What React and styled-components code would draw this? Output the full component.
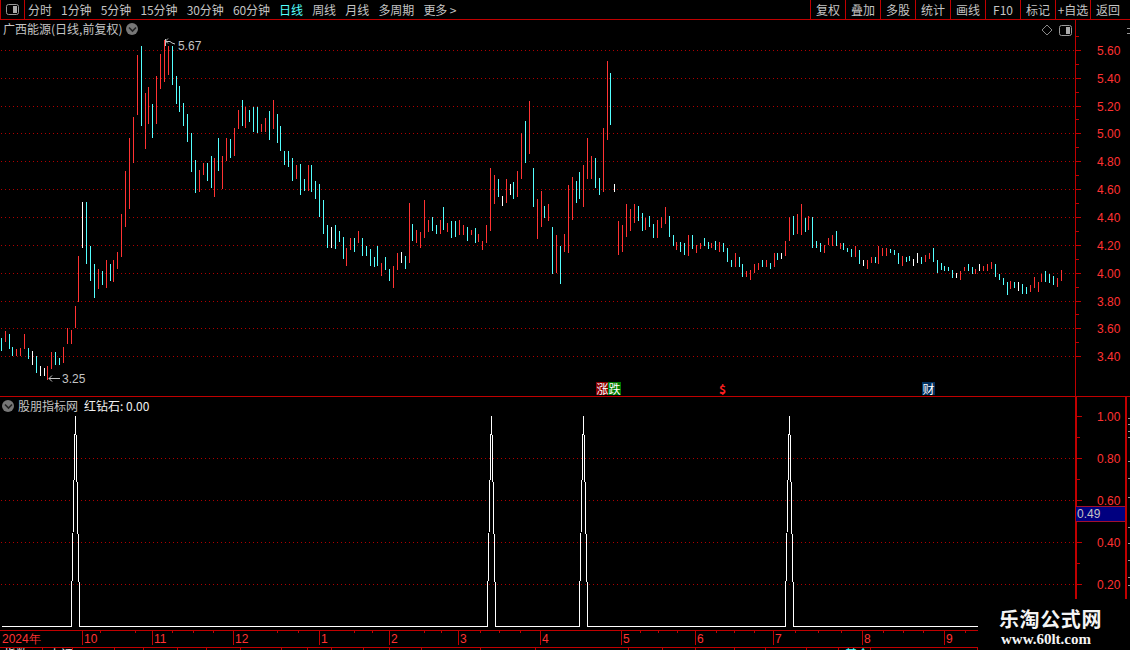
import React from "react";
import styled, { createGlobalStyle } from "styled-components";

const Global = createGlobalStyle`
  html, body { margin: 0; padding: 0; background: #000; overflow: hidden; }
  #root { width: 1130px; height: 650px; }
`;

const RED = "#ff3232";
const LINE = "#c00000";
const DOT = "#b00000";
const CYAN = "#54ffff";
const GREY = "#c4c4c4";
const CJK = `"Noto Sans CJK SC", "Liberation Sans", sans-serif`;
const NUM = `"Liberation Sans", Arial, sans-serif`;

const Page = styled.div`
  position: relative;
  width: 1130px;
  height: 650px;
  background: #000;
  display: flex;
  flex-direction: column;
  overflow: hidden;
  font-family: ${CJK};
`;

const Toolbar = styled.div`
  display: flex;
  align-items: stretch;
  height: 19px;
  border-bottom: 1px solid ${LINE};
  flex: none;
`;

const LayoutBox = styled.div`
  width: 22px;
  border-left: 1px solid ${LINE};
  border-right: 1px solid ${LINE};
  display: flex;
  align-items: center;
  justify-content: center;
  padding-right: 1px;
  box-sizing: content-box;
  margin-right: -1px;
`;

const Periods = styled.div`
  display: flex;
  align-items: center;
  gap: 9.3px;
  margin-left: 4px;
`;

const Period = styled.span`
  font-size: 12px;
  line-height: 19px;
  white-space: nowrap;
  letter-spacing: -0.1px;
  color: ${(p) => (p.$active ? CYAN : GREY)};
`;

const Actions = styled.div`
  display: flex;
  margin-left: auto;
  margin-right: 5px;
`;

const Action = styled.div`
  width: 34px;
  border-left: 1px solid ${LINE};
  font-size: 12px;
  line-height: 19px;
  text-align: center;
  white-space: nowrap;
  color: ${GREY};
`;

const PricePanel = styled.div`
  position: relative;
  height: 376px;
  border-bottom: 1px solid ${LINE};
  flex: none;
`;

const IndicatorPanel = styled.div`
  position: relative;
  height: 233px;
  flex: none;
`;

const Chart = styled.svg`
  display: block;
`;

const AxisText = styled.text`
  font-family: ${NUM};
  font-size: 12px;
  fill: ${RED};
`;

const NoteText = styled.text`
  font-family: ${NUM};
  font-size: 12px;
  fill: ${GREY};
`;

const PanelTitle = styled.div`
  position: absolute;
  left: ${(p) => p.$left}px;
  top: ${(p) => p.$top}px;
  display: flex;
  align-items: center;
  gap: ${(p) => p.$gap}px;
  height: 18px;
  font-size: 12px;
  line-height: 18px;
  white-space: nowrap;
  color: ${GREY};
`;

const Value = styled.span`
  color: #f0f0f0;
  margin-left: 2px;
`;

const Circle = styled.span`
  width: 12px;
  height: 12px;
  border-radius: 50%;
  background: #777;
  display: flex;
  align-items: center;
  justify-content: center;
  flex: none;
`;

const PanelIcons = styled.div`
  position: absolute;
  top: 4px;
  right: 58px;
  display: flex;
  align-items: center;
  gap: 6px;
`;

const Badge = styled.span`
  position: absolute;
  left: ${(p) => p.$left}px;
  top: 362px;
  width: 13px;
  height: 13px;
  background: ${(p) => p.$bg};
  color: ${(p) => p.$color || "#fff"};
  font-size: 12px;
  line-height: 13px;
  text-align: center;
  font-weight: ${(p) => (p.$bold ? 700 : 400)};
`;

const ValueFlag = styled.div`
  position: absolute;
  left: 1076px;
  top: 109px;
  width: 49px;
  height: 16px;
  box-sizing: border-box;
  background: #000080;
  border-top: 1px solid #a01030;
  border-bottom: 1px solid #a01030;
  color: ${GREY};
  font-family: ${NUM};
  font-size: 12px;
  line-height: 14px;
  padding-left: 1px;
`;

const TimeAxis = styled.div`
  height: 16px;
  flex: none;
  border-top: 1px solid ${LINE};
  border-bottom: 1px solid ${LINE};
`;

const StatusStrip = styled.div`
  display: flex;
  flex: 1;
  overflow: hidden;
`;

const StatusCell = styled.div`
  flex: none;
  width: ${(p) => p.$w}px;
  box-sizing: border-box;
  border-right: 1px solid ${LINE};
  padding-left: ${(p) => p.$pad || 4}px;
  color: ${(p) => p.$color || "#e8e8e8"};
  font-size: 12px;
  line-height: 12px;
  white-space: nowrap;
  overflow: hidden;
`;

const Watermark = styled.div`
  position: absolute;
  left: 978px;
  top: 599px;
  width: 152px;
  height: 51px;
  background: #000;
  display: flex;
  flex-direction: column;
  align-items: flex-start;
  padding-left: 21px;
  box-sizing: border-box;
`;

const MarkTitle = styled.div`
  margin-top: 8px;
  font-size: 20px;
  line-height: 24px;
  font-weight: 700;
  letter-spacing: 0.6px;
  color: #f4f4f4;
  white-space: nowrap;
`;

const MarkUrl = styled.div`
  margin-top: 1px;
  margin-left: 2px;
  font-family: "Liberation Serif", serif;
  font-size: 15px;
  line-height: 15px;
  font-weight: 700;
  color: #f4f4f4;
  white-space: nowrap;
`;

const raw = `c338-351 r331-342 c334-349 c347-356 r349-356 r348-356 r334-349 c348-359 w351-365 c356-373 w366-376 w368-376 r366-380 r352-369 c352-365 c358-365 r347-363 r328-344 r330-344 r306-328 r256-302 w202-248 c202-264 c246-281 c264-298 r269-289 c271-285 r260-288 c264-281 r260-282 r252-269 r214-257 r171-227 r138-209 r117-163 r55-115 c46-126 r93-149 r87-124 c104-138 r76-124 r54-89 r40-82 r46-75 c46-85 c76-104 c86-112 c103-126 c114-142 c133-172 c160-193 r170-192 r163-175 c163-181 c156-188 r158-197 c138-171 r156-189 r138-161 c139-158 r128-156 r110-129 c100-126 r107-128 c110-122 c107-132 c107-133 r124-132 r118-132 c111-140 r100-129 c114-143 c126-151 c151-165 c151-167 c158-181 r165-179 c164-195 c179-191 r165-191 c165-192 c181-199 c184-217 c200-234 c225-248 w227-248 c225-249 c231-242 c237-259 r248-266 r238-250 c238-252 r231-243 c238-256 c246-256 c249-266 c257-267 c246-266 r263-276 c257-270 c269-281 r266-288 r253-270 w252-263 c256-269 r203-263 c224-241 r230-243 r232-248 r200-238 r220-232 c217-231 c225-234 r220-234 c207-230 r223-232 c221-238 c221-237 r220-235 r225-235 c227-241 r230-235 c228-243 r234-242 r241-250 r225-243 r168-231 r175-204 c179-197 w196-206 r179-203 w184-195 c182-199 r171-197 r133-179 c121-163 r101-154 c168-207 r199-239 r191-227 c206-218 r204-221 c227-274 r235-273 c246-284 r234-252 r185-253 r177-220 c181-203 c172-199 r165-207 r138-179 r156-179 c158-188 c178-195 r128-192 r61-140 c73-125 w184-192 r221-255 r225-252 r204-237 r209-231 r204-223 c206-221 c213-231 r218-230 c216-227 c224-238 r220-238 r217-228 r207-224 c216-237 c235-246 r242-250 c242-252 c243-255 r235-256 c235-249 r245-253 r243-249 c238-246 c242-249 r243-248 c241-250 r242-252 c243-252 c248-262 c260-267 r253-267 c257-267 c264-277 r271-277 r270-280 r264-273 r263-270 c260-267 r260-267 c263-269 r253-267 c253-260 w253-259 r241-256 r217-241 c216-235 r214-234 r204-235 c218-232 r216-230 c217-248 c241-248 c243-252 r245-253 r238-245 r235-246 c231-246 r243-249 c243-250 c248-252 c249-257 r246-257 c250-264 w260-266 r260-269 r257-263 c257-263 r246-264 r248-256 r248-256 c249-253 c250-255 c253-264 r256-266 c257-262 c256-261 w259-266 w253-263 c257-264 r255-262 r253-259 c248-262 c260-273 c263-270 c266-271 c267-271 c270-278 w273-278 r271-280 r267-271 c264-271 c267-274 r269-274 w264-271 r266-271 r264-271 r262-269 c264-277 c274-280 c278-285 c282-295 r281-289 c282-288 w282-291 c284-294 c287-294 r285-292 r277-288 r282-292 r274-282 c271-282 c274-283 c276-285 r278-287 r270-281`;

const COLORS = { r: RED, c: CYAN, w: "#ffffff" };
const bars = raw.split(" ").map((s, i) => {
  const [t, b] = s.slice(1).split("-").map(Number);
  return { x: Math.floor(1.33 + i * 3.883), t, b, color: COLORS[s[0]] };
});

const priceLabels = ["5.60", "5.40", "5.20", "5.00", "4.80", "4.60", "4.40", "4.20", "4.00", "3.80", "3.60", "3.40"];
const priceY = [50, 78, 106, 133, 161, 189, 217, 245, 273, 301, 328, 356];
const lowerLabels = [["1.00", 416], ["0.80", 458], ["0.60", 500], ["0.40", 542], ["0.20", 584]];
const lowerMinor = [437, 479, 521, 563];
const edgeTicks = [418, 424, 431, 437, 461, 478, 497, 527, 543, 560, 577, 585];

const spikes = [75, 491, 583, 789];
const spikePoints = () => {
  const pts = ["1,626"];
  spikes.forEach((c) => {
    pts.push(`${c - 4},626`, `${c - 4},606`, `${c - 3},556`, `${c - 2},510`, `${c - 1},452`, `${c},416`);
    pts.push(`${c + 1},452`, `${c + 2},510`, `${c + 3},556`, `${c + 4},606`, `${c + 4},626`);
  });
  pts.push("978,626");
  return pts.join(" ");
};

const months = [["2024年", 0, 2], ["10", 82], ["11", 152], ["12", 233], ["1", 319], ["2", 389], ["3", 458], ["4", 540], ["5", 621], ["6", 695], ["7", 773], ["8", 862], ["9", 944]];
const axisTicks = [100, 135, 172, 193, 213, 277, 298, 354, 372, 424, 441, 480, 499, 520, 640, 658, 677, 716, 734, 754, 795, 818, 841, 883, 903, 923, 965];

const periods = ["分时", "1分钟", "5分钟", "15分钟", "30分钟", "60分钟", "日线", "周线", "月线", "多周期", "更多 >"];
const actions = ["复权", "叠加", "多股", "统计", "画线", "F10", "标记", "+自选", "返回"];
const statusCells = [
  { w: 43, text: "指数" }, { w: 30, text: "上证", pad: 6 }, { w: 42, text: "" }, { w: 29, text: "" }, { w: 34, text: "" },
  { w: 29, text: "" }, { w: 34, text: "" }, { w: 41, text: "" }, { w: 26, text: "" }, { w: 24, text: "" }, { w: 32, text: "" },
  { w: 26, text: "" }, { w: 32, text: "" }, { w: 59, text: "" }, { w: 55, text: "" }, { w: 93, text: "" }, { w: 34, text: "" },
  { w: 33, text: "" }, { w: 39, text: "" }, { w: 31, text: "" }, { w: 41, text: "" }, { w: 32, text: "" },
  { w: 32, text: "基金", color: CYAN, pad: 6 }, { w: 107, text: "" },
];

const Chevron = () => (
  <svg width="9" height="7" viewBox="0 0 9 7">
    <path d="M1 1.5 L4.5 5 L8 1.5" fill="none" stroke="#222" strokeWidth="1.6" />
  </svg>
);

const LayoutIcon = () => (
  <svg width="13" height="11" viewBox="0 0 13 11" shapeRendering="crispEdges">
    <rect x="0.5" y="0.5" width="12" height="10" rx="2" fill="none" stroke="#999" shapeRendering="auto" />
    <rect x="7" y="2" width="4" height="7" fill="#aaa" />
  </svg>
);

const Diamond = () => (
  <svg width="12" height="12" viewBox="0 0 12 12">
    <path d="M6 1 L11 6 L6 11 L1 6 Z" fill="none" stroke="#888" />
  </svg>
);

const Dotted = ({ y, x2 = 1075 }) => (
  <line x1="1" y1={y + 0.5} x2={x2} y2={y + 0.5} stroke={DOT} strokeDasharray="1 3" />
);

const PriceChart = () => (
  <Chart width="1130" height="376" viewBox="0 20 1130 376" shapeRendering="crispEdges">
    {priceY.map((y) => (
      <Dotted key={y} y={y} />
    ))}
    {bars.map((b, i) => (
      <rect key={i} x={b.x} y={b.t} width="1" height={b.b - b.t} fill={b.color} />
    ))}
    <rect x="1075" y="20" width="1" height="376" fill={LINE} />
    {priceY.map((y) => (
      <rect key={y} x="1076" y={y} width="5" height="1" fill={LINE} />
    ))}
    {priceY.map((y) => (
      <rect key={y} x="1076" y={y - 14} width="3" height="1" fill={LINE} />
    ))}
    {priceLabels.map((l, i) => (
      <AxisText key={l} x="1097" y={priceY[i] + 5} shapeRendering="auto">
        {l}
      </AxisText>
    ))}
    <g stroke={GREY} fill="none" shapeRendering="auto">
      <path d="M165.5 39 V46 M165.5 41 L168 38.5 M165.5 41 L168 43.5 M166 41.5 H170 L172 43 L175 44" />
      <path d="M60 378.5 H49 M49 378.5 L52 375.5 M49 378.5 L52 381.5" />
    </g>
    <NoteText x="178" y="50">5.67</NoteText>
    <NoteText x="62" y="383">3.25</NoteText>
    <g fill="#999">
      <rect x="1127" y="28" width="3" height="1" />
      <rect x="1127" y="33" width="3" height="1" />
    </g>
  </Chart>
);

const LowerChart = () => (
  <Chart width="1130" height="233" viewBox="0 397 1130 233" shapeRendering="crispEdges">
    {lowerLabels.slice(1).map(([, y]) => (
      <Dotted key={y} y={y} />
    ))}
    <polyline points={spikePoints()} fill="none" stroke="#fff" strokeWidth="1" transform="translate(0.5 0.5)" />
    <rect x="1075" y="397" width="2" height="202" fill={LINE} />
    <rect x="1125" y="397" width="2" height="202" fill={LINE} />
    {lowerLabels.map(([l, y]) => (
      <rect key={l} x="1077" y={y} width="5" height="1" fill={LINE} />
    ))}
    {lowerMinor.map((y) => (
      <rect key={y} x="1077" y={y} width="3" height="1" fill={LINE} />
    ))}
    {lowerLabels.map(([l, y]) => (
      <AxisText key={l} x="1097" y={y + 5} shapeRendering="auto">
        {l}
      </AxisText>
    ))}
    {edgeTicks.map((y) => (
      <rect key={y} x="1128" y={y} width="2" height="1" fill="#999" />
    ))}
  </Chart>
);

const TimeChart = () => (
  <Chart width="1130" height="14" viewBox="0 631 1130 14" shapeRendering="crispEdges">
    {axisTicks.map((x) => (
      <rect key={x} x={x} y="631" width="1" height="2" fill={LINE} />
    ))}
    {months.map(([l, x, off]) => (
      <g key={l}>
        {x > 0 && <rect x={x} y="631" width="1" height="14" fill={LINE} />}
        <AxisText x={off ? off : x + 2} y="643" shapeRendering="auto">
          {l}
        </AxisText>
      </g>
    ))}
  </Chart>
);

export default function App() {
  return (
    <Page>
      <Global />
      <Toolbar>
        <LayoutBox>
          <LayoutIcon />
        </LayoutBox>
        <Periods>
          {periods.map((p) => (
            <Period key={p} $active={p === "日线"}>
              {p}
            </Period>
          ))}
        </Periods>
        <Actions>
          {actions.map((a) => (
            <Action key={a}>{a}</Action>
          ))}
        </Actions>
      </Toolbar>

      <PricePanel>
        <PriceChart />
        <PanelTitle $left={3} $top={0} $gap={4}>
          <span>广西能源(日线,前复权)</span>
          <Circle>
            <Chevron />
          </Circle>
        </PanelTitle>
        <PanelIcons>
          <Diamond />
          <LayoutIcon />
        </PanelIcons>
        <Badge $left={596} $bg="#8a0000">涨</Badge>
        <Badge $left={608} $bg="#007a00">跌</Badge>
        <Badge $left={716} $bg="transparent" $color="#ff2020" $bold>$</Badge>
        <Badge $left={922} $bg="#00305f">财</Badge>
      </PricePanel>

      <IndicatorPanel>
        <LowerChart />
        <PanelTitle $left={2} $top={0} $gap={4}>
          <Circle>
            <Chevron />
          </Circle>
          <span>股朋指标网</span>
          <Value>红钻石: 0.00</Value>
        </PanelTitle>
        <ValueFlag>0.49</ValueFlag>
      </IndicatorPanel>

      <TimeAxis>
        <TimeChart />
      </TimeAxis>

      <StatusStrip>
        {statusCells.map((c, i) => (
          <StatusCell key={i} $w={c.w} $pad={c.pad} $color={c.color}>
            {c.text}
          </StatusCell>
        ))}
      </StatusStrip>

      <Watermark>
        <MarkTitle>乐淘公式网</MarkTitle>
        <MarkUrl>www.60lt.com</MarkUrl>
      </Watermark>
    </Page>
  );
}
